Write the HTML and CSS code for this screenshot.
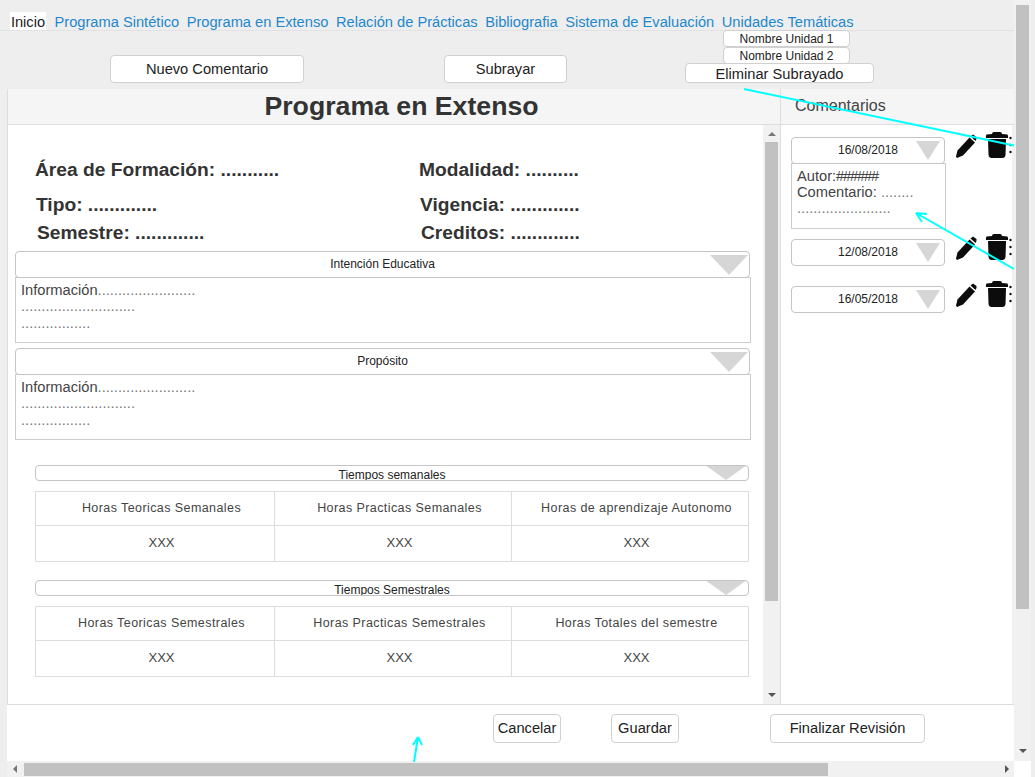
FILE: index.html
```html
<!DOCTYPE html>
<html lang="es">
<head>
  <meta charset="UTF-8" />
  <title>Programa en Extenso</title>
  <link rel="stylesheet" href="styles.css">
</head>
<body>
  <div class="window">
    <div class="viewport">
      <nav class="tabs">
        <a class="tab tab-active">Inicio</a>
        <a class="tab">Programa Sintético</a>
        <a class="tab">Programa en Extenso</a>
        <a class="tab">Relación de Prácticas</a>
        <a class="tab">Bibliografia</a>
        <a class="tab">Sistema de Evaluación</a>
        <a class="tab">Unidades Temáticas</a>
      </nav>

      <div class="toolbar">
        <button class="btn btn-new">Nuevo Comentario</button>
        <button class="btn btn-underline">Subrayar</button>
        <div class="unit-menu">
          <button class="btn btn-unit">Nombre Unidad 1</button>
          <button class="btn btn-unit">Nombre Unidad 2</button>
          <button class="btn btn-clear">Eliminar Subrayado</button>
        </div>
      </div>

      <div class="main">
        <section class="program">
          <h1 class="panel-head program-title">Programa en Extenso</h1>
          <div class="program-body">
            <div class="program-content">
              <div class="field-row field-row-1">
                <span class="field">Área de Formación: ...........</span>
                <span class="field">Modalidad: ..........</span>
              </div>
              <div class="field-row field-row-2">
                <span class="field">Tipo: .............</span>
                <span class="field">Vigencia: .............</span>
              </div>
              <div class="field-row field-row-3">
                <span class="field">Semestre: .............</span>
                <span class="field">Creditos: .............</span>
              </div>

              <div class="accordion accordion-first">
                <div class="select-head">Intención Educativa<i class="caret"></i></div>
                <div class="accordion-text">
                  Información<span class="dots">........................</span><br>
                  <span class="dots">............................</span><br>
                  <span class="dots">.................</span>
                </div>
              </div>
              <div class="accordion">
                <div class="select-head">Propósito<i class="caret"></i></div>
                <div class="accordion-text">
                  Información<span class="dots">........................</span><br>
                  <span class="dots">............................</span><br>
                  <span class="dots">.................</span>
                </div>
              </div>

              <div class="hours hours-week">
                <div class="select-head select-small">Tiempos semanales<i class="caret"></i></div>
                <table class="hours-table">
                  <tr>
                    <th>Horas Teoricas Semanales</th>
                    <th>Horas Practicas Semanales</th>
                    <th>Horas de aprendizaje Autonomo</th>
                  </tr>
                  <tr><td>XXX</td><td>XXX</td><td>XXX</td></tr>
                </table>
              </div>
              <div class="hours hours-term">
                <div class="select-head select-small">Tiempos Semestrales<i class="caret"></i></div>
                <table class="hours-table">
                  <tr>
                    <th>Horas Teoricas Semestrales</th>
                    <th>Horas Practicas Semestrales</th>
                    <th>Horas Totales del semestre</th>
                  </tr>
                  <tr><td>XXX</td><td>XXX</td><td>XXX</td></tr>
                </table>
              </div>
            </div>

            <div class="inner-scroll">
              <i class="arrow-up"></i>
              <div class="inner-thumb"></div>
              <i class="arrow-down"></i>
            </div>
          </div>
        </section>

        <aside class="comments">
          <h2 class="panel-head comments-title">Comentarios</h2>
          <div class="comments-body">
            <div class="comment comment-open">
              <div class="comment-col">
                <div class="select-head select-date">16/08/2018<i class="caret"></i></div>
                <div class="comment-text">
                  Autor:<span class="hash">######</span><br>
                  Comentario: <span class="dots">........</span><br>
                  <span class="dots">.......................</span>
                </div>
              </div>
              <svg class="icon-pencil" viewBox="0 0 21 24"><use href="#pencil"/></svg>
              <svg class="icon-trash" viewBox="0 0 27 26"><use href="#trash"/></svg>
            </div>
            <div class="comment comment-2">
              <div class="comment-col">
                <div class="select-head select-date">12/08/2018<i class="caret"></i></div>
              </div>
              <svg class="icon-pencil" viewBox="0 0 21 24"><use href="#pencil"/></svg>
              <svg class="icon-trash" viewBox="0 0 27 26"><use href="#trash"/></svg>
            </div>
            <div class="comment comment-3">
              <div class="comment-col">
                <div class="select-head select-date">16/05/2018<i class="caret"></i></div>
              </div>
              <svg class="icon-pencil" viewBox="0 0 21 24"><use href="#pencil"/></svg>
              <svg class="icon-trash" viewBox="0 0 27 26"><use href="#trash"/></svg>
            </div>
          </div>
        </aside>
      </div>

      <div class="footer">
        <button class="btn btn-cancel">Cancelar</button>
        <button class="btn btn-save">Guardar</button>
        <button class="btn btn-finish">Finalizar Revisión</button>
      </div>

      <div class="hscroll">
        <i class="arrow-left"></i>
        <div class="hscroll-thumb"></div>
        <i class="arrow-right"></i>
      </div>
    </div>

    <div class="vscroll">
      <div class="vscroll-track">
        <div class="vscroll-thumb"></div>
        <i class="arrow-down"></i>
      </div>
      <div class="vscroll-corner"></div>
    </div>

    <!-- cyan review marks drawn over the page -->
    <svg class="marks" viewBox="0 0 1035 777">
      <line x1="744" y1="89" x2="1014" y2="145.5"/>
      <path d="M1014 269 L916 213 M916 213 L927 214 M916 213 L922 222"/>
      <path d="M414 762 L418 737 M418 737 L413 745 M418 737 L422 745"/>
    </svg>
  </div>

  <svg class="defs" width="0" height="0">
    <symbol id="pencil" viewBox="0 0 21 24">
      <path d="M1 24 L0 22.5 L1.5 16.5 L13.5 3.5 L19 8.5 L7 21.5 Z"/>
      <path d="M14.5 2.5 L17 0.5 L20.5 3 L20.5 5 L19.5 7 Z"/>
    </symbol>
    <symbol id="trash" viewBox="0 0 27 26">
      <path d="M7 2 Q7 0 9 0 H15 Q17 0 17 2 L22.5 2.5 Q23.5 4 23 6 H1 Q0.5 4 1.5 2.5 Z"/>
      <path d="M3 7 H21 L20.5 23 Q20 26 17.5 26 H6.5 Q4 26 3.5 23 Z"/>
      <circle cx="25.5" cy="6" r="1.2"/>
      <circle cx="25.5" cy="13" r="1.2"/>
      <circle cx="25.5" cy="20" r="1.2"/>
    </symbol>
  </svg>
</body>
</html>
```

FILE: styles.css
```css
:root {
  --text-color: #444;
  --line-color: #ddd;
  --box-border: #c4c4c4;
  --track-color: #f1f1f1;
  --thumb-color: #c1c1c1;
  --caret-color: #d6d6d6;
  --link-color: #1e88cc;
}

* {
  box-sizing: border-box;
  margin: 0;
  padding: 0;
}

body {
  font-family: "Liberation Sans", Arial, sans-serif;
  font-size: 14.67px;
  color: var(--text-color);
  background: #eee;
  overflow: hidden;
}

.window {
  position: relative;
  display: flex;
  width: 1035px;
  height: 777px;
  overflow: hidden;
  background: #eee;
}

.viewport {
  display: flex;
  flex-direction: column;
  width: 1014px;
  height: 777px;
}

/* tabs */
.tabs {
  display: flex;
  align-items: flex-end;
  height: 31px;
  padding-left: 10px;
  border-bottom: 1px solid #e2e2e2;
}

.tab {
  height: 18px;
  line-height: 21px;
  margin-right: 7.5px;
  color: var(--link-color);
  white-space: nowrap;
}

.tab-active {
  width: 36px;
  margin-right: 8.5px;
  text-align: center;
  color: #222;
  background: #fff;
}

/* toolbar */
.toolbar {
  display: flex;
  align-items: flex-end;
  height: 58px;
  padding: 0 0 6px 110px;
}

.btn {
  height: 28px;
  font-family: inherit;
  font-size: 14.67px;
  color: #222;
  background: #fff;
  border: 1px solid #d0d0d0;
  border-radius: 4px;
}

.btn-new { width: 194px; }
.btn-underline { width: 123px; margin-left: 140px; }

.unit-menu {
  display: flex;
  flex-direction: column;
  align-items: center;
  width: 189px;
  margin-left: 118px;
}

.btn-unit {
  width: 127px;
  height: 17px;
  margin-left: 14px;
  padding-top: 2px;
  font-size: 12px;
  line-height: 13px;
}

.btn-clear {
  width: 189px;
  height: 20px;
  margin-top: -1px;
  padding-top: 2px;
  line-height: 16px;
}

/* main panels */
.main {
  display: flex;
  height: 616px;
  margin-left: 7px;
  background: #fff;
}

.panel-head {
  height: 36px;
  background: #f5f5f5;
  border-bottom: 1px solid var(--line-color);
}

.program {
  display: flex;
  flex-direction: column;
  width: 774px;
  border-right: 1px solid var(--line-color);
  border-left: 1px solid var(--line-color);
  border-bottom: 1px solid var(--line-color);
}

.program-title {
  padding-left: 15px;
  font-size: 26.67px;
  line-height: 34px;
  text-align: center;
  color: #333;
}

.program-body {
  display: flex;
  flex: 1;
  min-height: 0;
}

.program-content {
  flex: 1;
  min-width: 0;
  padding: 33px 0 0 7px;
}

.field-row {
  display: flex;
  font-size: 19.2px;
  font-weight: bold;
  line-height: 24px;
  color: #333;
}

.field { flex: none; width: 384px; white-space: nowrap; }

.field-row-1 { padding-left: 20px; }
.field-row-2 { padding-left: 21px; margin-top: 11px; }
.field-row-3 { padding-left: 22px; margin-top: 4px; }

/* select-like headers */
.select-head {
  position: relative;
  height: 27px;
  font-size: 12px;
  line-height: 25px;
  text-align: center;
  color: #222;
  background: #fff;
  border: 1px solid var(--box-border);
  border-radius: 4px;
  overflow: hidden;
}

.caret {
  position: absolute;
  top: 3px;
  right: 1px;
  width: 0;
  height: 0;
  border-left: 19px solid transparent;
  border-right: 19px solid transparent;
  border-top: 20px solid var(--caret-color);
}

.accordion { width: 736px; margin-bottom: 5px; }
.accordion-first { margin-top: 6px; }
.accordion .select-head { width: 735px; }

.accordion-text {
  height: 66px;
  margin-top: -1px;
  padding: 4px 5px;
  line-height: 16.3px;
  border: 1px solid #ccc;
}

.dots { color: #7a7a7a; }

.hours { width: 714px; margin-left: 20px; }
.hours-week { margin-top: 25px; }
.hours-term { margin-top: 18px; }

.select-small {
  height: 16px;
  line-height: 19px;
}

.select-small .caret {
  top: -1px;
  right: 1px;
  border-left-width: 21px;
  border-right-width: 21px;
  border-top-width: 15px;
}

.hours-table {
  width: 714px;
  margin-top: 10px;
  table-layout: fixed;
  border-collapse: collapse;
  font-size: 12.5px;
  letter-spacing: .42px;
  text-align: center;
}

.hours-table th,
.hours-table td {
  padding: 0 0 2px 13px;
  border: 1px solid var(--line-color);
  font-weight: normal;
}

.hours-table th { height: 34px; }
.hours-table td { height: 36px; font-size: 13px; letter-spacing: 0; }
.hours-table th:first-child { width: 239px; }

/* scrollbars */
.inner-scroll {
  position: relative;
  width: 17px;
  flex: none;
  background: var(--track-color);
}

.inner-thumb {
  width: 13px;
  height: 459px;
  margin: 17px 0 0 2px;
  background: var(--thumb-color);
}

.arrow-up,
.arrow-down,
.arrow-left,
.arrow-right {
  position: absolute;
  width: 0;
  height: 0;
  border-style: solid;
  border-color: transparent;
}

.arrow-up {
  top: 7px;
  left: 5px;
  border-width: 0 4px 4px;
  border-bottom-color: #777;
}

.arrow-down {
  bottom: 7px;
  left: 5px;
  border-width: 4px 4px 0;
  border-top-color: #555;
}

.hscroll {
  position: relative;
  display: flex;
  align-items: flex-start;
  flex: none;
  height: 16px;
  margin-left: 7px;
  background: var(--track-color);
}

.hscroll-thumb {
  width: 804px;
  height: 13px;
  margin: 2px 0 0 17px;
  background: var(--thumb-color);
}

.arrow-left {
  top: 4px;
  left: 6px;
  border-width: 4px 4px 4px 0;
  border-right-color: #777;
}

.arrow-right {
  top: 4px;
  right: 5px;
  border-width: 4px 0 4px 4px;
  border-left-color: #555;
}

.vscroll {
  display: flex;
  flex-direction: column;
  width: 21px;
}

.vscroll-track {
  position: relative;
  flex: 1;
  width: 17px;
  padding-top: 5px;
  background: var(--track-color);
}

.vscroll-track .arrow-down { bottom: 8px; }

.vscroll-thumb {
  width: 13px;
  height: 604px;
  margin-left: 2px;
  background: var(--thumb-color);
}

.vscroll-corner {
  width: 17px;
  height: 16px;
  background: #fff;
}

/* comments */
.comments {
  display: flex;
  flex-direction: column;
  width: 233px;
  border-bottom: 1px solid var(--line-color);
}

.comments-title {
  padding-left: 14px;
  font-size: 16px;
  font-weight: normal;
  line-height: 33px;
  color: #444;
}

.comments-body {
  flex: 1;
  margin-right: 2px;
  padding: 12px 0 0 10px;
  background: #fff;
  box-shadow: 2px 0 0 var(--track-color);
}

.comment {
  display: flex;
  align-items: flex-start;
}

.comment-col { width: 155px; }
.comment-2 { margin-top: 10px; }
.comment-3 { margin-top: 20px; }

.select-date {
  width: 154px;
  line-height: 25px;
}

.select-date .caret {
  top: 3px;
  right: 4px;
  border-left-width: 12.5px;
  border-right-width: 12.5px;
  border-top-width: 19px;
}

.comment-text {
  height: 66px;
  margin-top: -1px;
  padding: 4px 5px;
  line-height: 16px;
  border: 1px solid #ccc;
}

.hash { letter-spacing: -1.15px; }

.icon-pencil,
.icon-trash {
  flex: none;
  fill: #0c0c0c;
  filter: blur(.45px);
}

.icon-pencil {
  width: 21px;
  height: 24px;
  margin: -3px 0 0 10px;
}

.icon-trash {
  width: 27px;
  height: 26px;
  margin: -5px 0 0 8px;
}

/* footer */
.footer {
  display: flex;
  align-items: flex-start;
  flex: none;
  height: 56px;
  margin-left: 7px;
  padding: 9px 0 0 486px;
  background: #fff;
}

.footer .btn { height: 29px; padding-bottom: 1px; }

.btn-cancel { width: 68px; }
.btn-save { width: 68px; margin-left: 50px; }
.btn-finish { width: 155px; margin-left: 91px; }

/* review marks */
.marks {
  position: absolute;
  top: 0;
  left: 0;
  width: 1035px;
  height: 777px;
  pointer-events: none;
  fill: none;
  stroke: #0ff;
  stroke-width: 2;
}

.defs { position: absolute; }
```
